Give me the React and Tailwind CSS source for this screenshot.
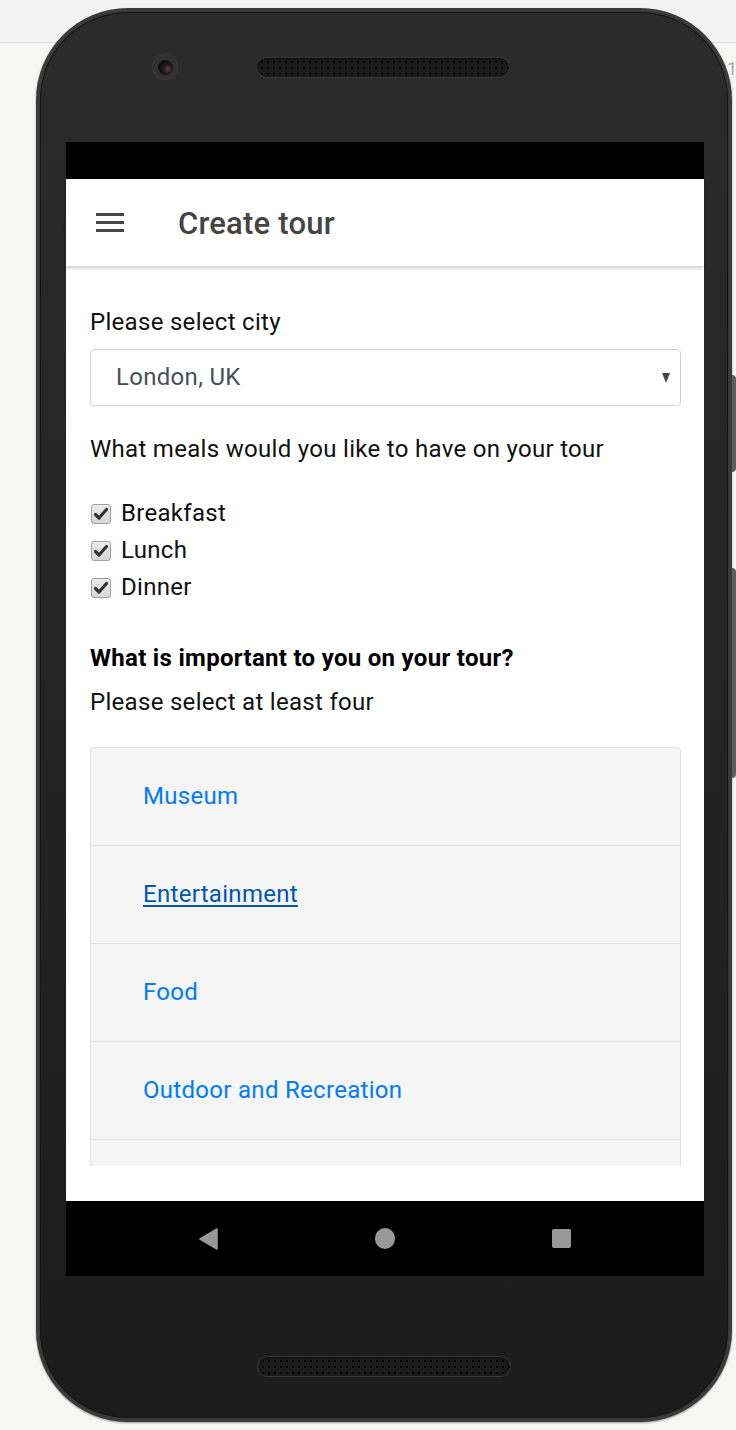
const meals = ["Breakfast", "Lunch", "Dinner"];
const interests = ["Museum", "Entertainment", "Food", "Outdoor and Recreation", ""];

function Speaker() {
  return (
    <div className="w-[254px] h-[21px] rounded-full border border-[#3a3a3a] bg-[#1b1b1b] bg-[radial-gradient(circle,#050505_1px,transparent_1.6px)] bg-[length:6px_6px] bg-[position:2px_1px] shadow-[inset_0_1px_2px_rgba(0,0,0,0.6)]" />
  );
}

function Checkbox() {
  return (
    <span className="w-[20px] h-[20px] rounded-[3px] border border-[#a0a0a0] bg-[linear-gradient(#ececec,#d6d6d6)] flex items-center justify-center">
      <svg width="14" height="14" viewBox="0 0 14 14">
        <path d="M1.5 7.5l3.5 3.5L12.5 2.5" fill="none" stroke="#333" strokeWidth="3.2" strokeLinecap="round" strokeLinejoin="round" />
      </svg>
    </span>
  );
}

export default function App() {
  return (
    <div className="relative w-[736px] h-[1430px] overflow-hidden bg-[#f6f6f4] font-[Roboto,sans-serif]">
      <div className="absolute top-0 left-0 w-full h-[43px] bg-[#f3f3f3] border-b border-[#dedede]" />
      <span className="absolute left-[727px] top-[58px] text-[18px] leading-[22px] text-[#aaa]">1</span>

      <div className="relative ml-[36px] mt-[8px] w-[696px] h-[1414px] rounded-[92px] bg-[#3a3a3a] p-[4px] shadow-[0_1px_2px_rgba(0,0,0,0.4)]">
        <div className="absolute right-[-4px] top-[367px] w-[4px] h-[97px] rounded-r bg-[#5c5c5c]" />
        <div className="absolute right-[-4px] top-[560px] w-[4px] h-[210px] rounded-r bg-[#5c5c5c]" />

        <div className="w-full h-full rounded-[88px] bg-[linear-gradient(#2b2b2b,#1c1c1c)] shadow-[inset_0_0_0_1px_#141414] flex flex-col">
          <div className="h-[130px] flex items-center pl-[113px] pb-[20px]">
            <div className="w-[24px] h-[24px] rounded-full bg-[#303030] shadow-[0_0_0_1px_#3a3a3a] flex items-center justify-center">
              <div className="w-[15px] h-[15px] rounded-full bg-[radial-gradient(circle_at_65%_60%,#7a3a3a_0,#1a1a22_35%,#0c0c0c_70%)]" />
            </div>
            <div className="ml-[79px]">
              <Speaker />
            </div>
          </div>

          <div className="ml-[26px] w-[638px] h-[1134px] flex flex-col bg-white">
            <div className="h-[37px] bg-black" />
            <div className="h-[87px] flex items-center bg-white shadow-[0_2px_4px_rgba(0,0,0,0.22)] relative z-10">
              <div className="ml-[30px] flex flex-col gap-[5px]">
                <span className="block w-[28px] h-[3px] bg-[#444]" />
                <span className="block w-[28px] h-[3px] bg-[#444]" />
                <span className="block w-[28px] h-[3px] bg-[#444]" />
              </div>
              <h1 className="ml-[54px] pt-[3px] text-[31px] font-medium text-[#444] tracking-[0.2px]">Create tour</h1>
            </div>

            <div className="h-[935px] pb-[35px] flex flex-col">
              <div className="flex-1 overflow-hidden pl-[24px] pr-[23px] pt-[40px] text-[24px] leading-[33px] tracking-[0.3px] text-[#111]">
                <p>Please select city</p>
                <div className="mt-[10px] h-[57px] rounded-[4px] border border-[#ced4da] flex items-center justify-between pl-[25px] pr-[10px]">
                  <span className="text-[#495057]">London, UK</span>
                  <svg width="8" height="10" viewBox="0 0 8 10">
                    <path d="M0 0h8L4 10z" fill="#444" />
                  </svg>
                </div>

                <p className="mt-[27px]">What meals would you like to have on your tour</p>
                <div className="mt-[29px] flex flex-col">
                  {meals.map((m) => (
                    <label key={m} className="h-[37px] flex items-center gap-[10px] pl-[1px]">
                      <Checkbox />
                      <span>{m}</span>
                    </label>
                  ))}
                </div>

                <p className="mt-[36px] font-bold text-black">What is important to you on your tour?</p>
                <p className="mt-[11px]">Please select at least four</p>

                <ul className="mt-[28px] rounded-t-[4px] border border-[#e0e0e0] bg-[#f5f5f5]">
                  {interests.map((item, i) => (
                    <li key={i} className="h-[98px] flex items-center pl-[52px] border-b border-[#e0e0e0]">
                      <a
                        className={
                          item === "Entertainment"
                            ? "text-[#0056b3] underline underline-offset-[3px]"
                            : "text-[#007bff]"
                        }
                      >
                        {item}
                      </a>
                    </li>
                  ))}
                </ul>
              </div>
            </div>

            <div className="h-[75px] bg-black flex items-center justify-center">
              <div className="w-[176px] flex justify-center">
                <svg width="20" height="22" viewBox="0 0 20 22">
                  <path d="M18 1v20L1 11z" fill="#999" stroke="#999" strokeWidth="1.5" strokeLinejoin="round" />
                </svg>
              </div>
              <div className="w-[176px] flex justify-center">
                <span className="block w-[20px] h-[21px] rounded-full bg-[#999]" />
              </div>
              <div className="w-[176px] flex justify-center">
                <span className="block w-[19px] h-[19px] rounded-[2px] bg-[#999]" />
              </div>
            </div>
          </div>

          <div className="flex-1 flex items-end justify-center pb-[41px]">
            <Speaker />
          </div>
        </div>
      </div>
    </div>
  );
}
